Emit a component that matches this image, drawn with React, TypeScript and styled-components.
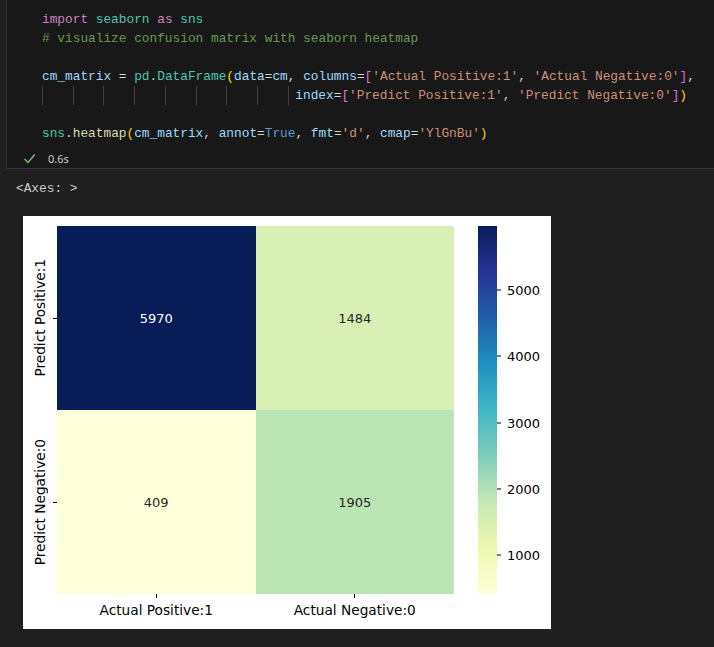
import styled, { createGlobalStyle } from "styled-components";

const GlobalStyle = createGlobalStyle`
  body {
    margin: 0;
    background: #1f1f1f;
  }
`;

const C = {
  kw: "#c586c0",
  cls: "#4ec9b0",
  cmt: "#6a9955",
  vr: "#9cdcfe",
  op: "#d4d4d4",
  br1: "#ffd700",
  br2: "#da70d6",
  str: "#ce9178",
  bool: "#569cd6",
  fn: "#dcdcaa",
};

type Token = [string, string];

const lines: Token[][] = [
  [["import", C.kw], [" ", C.op], ["seaborn", C.cls], [" ", C.op], ["as", C.kw], [" ", C.op], ["sns", C.cls]],
  [["# visualize confusion matrix with seaborn heatmap", C.cmt]],
  [],
  [
    ["cm_matrix", C.vr], [" = ", C.op], ["pd", C.cls], [".", C.op], ["DataFrame", C.cls], ["(", C.br1],
    ["data", C.vr], ["=", C.op], ["cm", C.vr], [", ", C.op], ["columns", C.vr], ["=", C.op], ["[", C.br2],
    ["'Actual Positive:1'", C.str], [", ", C.op], ["'Actual Negative:0'", C.str], ["]", C.br2], [",", C.op],
  ],
  [
    ["index", C.vr], ["=", C.op], ["[", C.br2], ["'Predict Positive:1'", C.str], [", ", C.op],
    ["'Predict Negative:0'", C.str], ["]", C.br2], [")", C.br1],
  ],
  [],
  [
    ["sns", C.cls], [".", C.op], ["heatmap", C.fn], ["(", C.br1], ["cm_matrix", C.vr], [", ", C.op],
    ["annot", C.vr], ["=", C.op], ["True", C.bool], [", ", C.op], ["fmt", C.vr], ["=", C.op], ["'d'", C.str],
    [", ", C.op], ["cmap", C.vr], ["=", C.op], ["'YlGnBu'", C.str], [")", C.br1],
  ],
];

// YlGnBu stops
const ylgnbu = ["#ffffd9", "#edf8b1", "#c7e9b4", "#7fcdbb", "#41b6c4", "#1d91c0", "#225ea8", "#253494", "#081d58"];

const cells = [
  { v: 5970, bg: "#081d58", fg: "#ffffff" },
  { v: 1484, bg: "#d8f0b3", fg: "#262626" },
  { v: 409, bg: "#ffffd9", fg: "#262626" },
  { v: 1905, bg: "#bce5b5", fg: "#262626" },
];

const vmin = 409;
const vmax = 5970;
const PLOT_H = 368;
const cbarTicks = [5000, 4000, 3000, 2000, 1000];

export default function App() {
  return (
    <Page>
      <GlobalStyle />
      <CodeCell>
        {lines.map((line, i) => (
          <CodeLine key={i}>
            {i === 4 && (
              <>
                {Array.from({ length: 8 }).map((_, g) => (
                  <IndentGuide key={g} $cols={4} />
                ))}
                <IndentGuide $cols={1} />
              </>
            )}
            {line.map(([t, c], j) => (
              <Tok key={j} $c={c}>
                {t}
              </Tok>
            ))}
          </CodeLine>
        ))}
        <StatusRow>
          <svg width="13" height="13" viewBox="0 0 13 13">
            <path d="M1.5 7 L5 10.5 L11.8 2.5" fill="none" stroke="#73c46b" strokeWidth="1.4" />
          </svg>
          <Elapsed>0.6s</Elapsed>
        </StatusRow>
      </CodeCell>

      <Output>
        <ReprText>&lt;Axes: &gt;</ReprText>
        <Figure>
          <YAxis>
            {["Predict Positive:1", "Predict Negative:0"].map((l) => (
              <YTickRow key={l}>
                <YLabel>{l}</YLabel>
                <YTick />
              </YTickRow>
            ))}
          </YAxis>
          <Heatmap>
            {cells.map((c) => (
              <Cell key={c.v} $bg={c.bg} $fg={c.fg}>
                {c.v}
              </Cell>
            ))}
          </Heatmap>
          <XAxis>
            {["Actual Positive:1", "Actual Negative:0"].map((l) => (
              <XTickCol key={l}>
                <XTick />
                <XLabel>{l}</XLabel>
              </XTickCol>
            ))}
          </XAxis>
          <Colorbar />
          <CbarAxis>
            {cbarTicks.map((t) => (
              <CbarTick key={t} style={{ top: ((vmax - t) / (vmax - vmin)) * PLOT_H }}>
                <CbarTickMark />
                {t}
              </CbarTick>
            ))}
          </CbarAxis>
        </Figure>
      </Output>
    </Page>
  );
}

const Page = styled.div`
  width: 714px;
  height: 647px;
  overflow: hidden;
  background: #1f1f1f;
`;

const CodeCell = styled.div`
  margin-left: 6px;
  padding: 10px 0 0 35px;
  background: #181818;
  border-left: 1px solid #2c2c2c;
  border-bottom: 1px solid #36363d;
  font-family: "Liberation Mono", "DejaVu Sans Mono", monospace;
  font-size: 12.8px;
`;

const CodeLine = styled.div`
  height: 19px;
  line-height: 19px;
  white-space: pre;
  color: #d4d4d4;
`;

const Tok = styled.span<{ $c: string }>`
  color: ${(p) => p.$c};
`;

const IndentGuide = styled.span<{ $cols: number }>`
  display: inline-block;
  vertical-align: top;
  width: ${(p) => p.$cols}ch;
  height: 19px;
  box-shadow: inset 1px 0 0 #404040;
`;

const StatusRow = styled.div`
  display: flex;
  align-items: center;
  gap: 12px;
  height: 19px;
  margin-top: 6px;
  margin-left: -19px;
`;

const Elapsed = styled.span`
  font-family: "Noto Sans", "Open Sans", sans-serif;
  font-size: 11px;
  color: #cccccc;
`;

const Output = styled.div`
  padding: 10px 0 0 16px;
`;

const ReprText = styled.div`
  font-family: "Liberation Mono", "DejaVu Sans Mono", monospace;
  font-size: 12.8px;
  line-height: 19px;
  color: #cccccc;
`;

const Figure = styled.div`
  margin: 18px 0 0 7px;
  width: 528px;
  height: 413px;
  background: #ffffff;
  display: grid;
  grid-template-columns: 34px 397px 24px 19px 1fr;
  grid-template-rows: 10px ${PLOT_H}px 1fr;
  font-family: "DejaVu Sans", sans-serif;
  font-size: 13.7px;
  color: #000000;
`;

const YAxis = styled.div`
  grid-column: 1;
  grid-row: 2;
  display: grid;
  grid-template-rows: 1fr 1fr;
`;

const YTickRow = styled.div`
  display: flex;
  align-items: center;
  justify-content: flex-end;
`;

const YLabel = styled.div`
  writing-mode: vertical-rl;
  transform: rotate(180deg);
  line-height: 15px;
  margin-right: 5px;
  white-space: nowrap;
`;

const YTick = styled.div`
  width: 4px;
  height: 1px;
  background: #000;
`;

const Heatmap = styled.div`
  grid-column: 2;
  grid-row: 2;
  display: grid;
  grid-template-columns: 1fr 1fr;
  grid-template-rows: 1fr 1fr;
`;

const Cell = styled.div<{ $bg: string; $fg: string }>`
  display: flex;
  align-items: center;
  justify-content: center;
  background: ${(p) => p.$bg};
  color: ${(p) => p.$fg};
  font-size: 13px;
`;

const XAxis = styled.div`
  grid-column: 2;
  grid-row: 3;
  display: grid;
  grid-template-columns: 1fr 1fr;
  align-items: start;
`;

const XTickCol = styled.div`
  display: flex;
  flex-direction: column;
  align-items: center;
`;

const XTick = styled.div`
  width: 1px;
  height: 4px;
  background: #000;
`;

const XLabel = styled.div`
  margin-top: 4px;
  line-height: 16px;
  white-space: nowrap;
`;

const Colorbar = styled.div`
  grid-column: 4;
  grid-row: 2;
  background: linear-gradient(to top, ${ylgnbu.join(", ")});
`;

const CbarAxis = styled.div`
  grid-column: 5;
  grid-row: 2;
  position: relative;
`;

const CbarTick = styled.div`
  position: absolute;
  left: 0;
  display: flex;
  align-items: center;
  gap: 6px;
  transform: translateY(-50%);
  line-height: 15px;
  font-size: 13px;
`;

const CbarTickMark = styled.div`
  width: 4px;
  height: 1px;
  background: #000;
`;
